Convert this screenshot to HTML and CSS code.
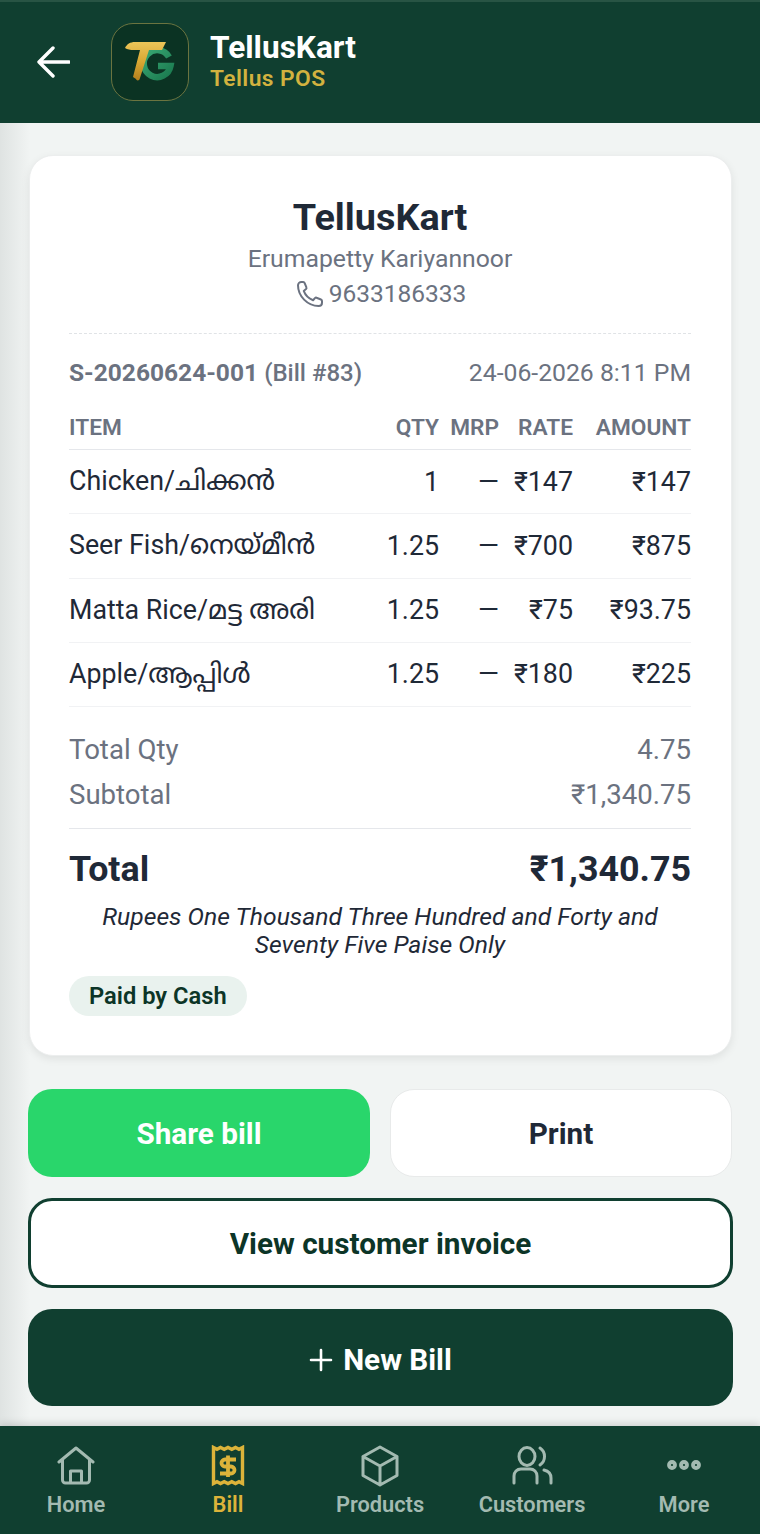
FILE: index.html
```html
<!DOCTYPE html>
<html lang="en">
<head>
    <meta charset="UTF-8">
    <meta name="viewport" content="width=device-width, initial-scale=1.0">
    <title>TellusKart</title>
    <link rel="stylesheet" href="styles.css">
</head>
<body>
    <header class="topbar">
        <svg class="back" width="34" height="34" viewBox="0 0 34 34" fill="none" stroke="#fff" stroke-width="3.4" stroke-linecap="round" stroke-linejoin="round"><path d="M3 17H33M17 3 3 17l14 14"/></svg>
        <div class="logo">
            <svg width="78" height="78" viewBox="0 0 78 78">
                <defs>
                    <linearGradient id="gold" x1="0" y1="0" x2="0" y2="1"><stop offset="0" stop-color="#edc659"/><stop offset=".5" stop-color="#d9a834"/><stop offset="1" stop-color="#b27f1d"/></linearGradient>
                    <linearGradient id="grn" x1="0" y1="0" x2="1" y2="1"><stop offset="0" stop-color="#3aa874"/><stop offset="1" stop-color="#1a7a4f"/></linearGradient>
                </defs>
                <path d="M58 35A13.500 13.500 0 1 0 59.500 44H47" fill="none" stroke="url(#grn)" stroke-width="6.500"/>
                <path d="M14 26C16 22 19 20 24 20H55L51 28H38L28.500 57.500C27 59 25.500 58.500 25 57L22 55 29 28H23C19 28 16.500 27.500 14 26z" fill="url(#gold)"/>
            </svg>
        </div>
        <div class="brand">
            <div class="brand-name">TellusKart</div>
            <div class="brand-sub">Tellus POS</div>
        </div>
    </header>

    <main class="content">
        <section class="receipt">
            <div class="shop">
                <h1>TellusKart</h1>
                <p>Erumapetty Kariyannoor</p>
                <p class="phone">
                    <svg width="32" height="32" viewBox="0 0 24 24" fill="none" stroke="#6b7280" stroke-width="1.500" stroke-linecap="round" stroke-linejoin="round"><path d="M3 5.500C3 4 4.200 3 5.500 3h1.400c.5 0 .9.300 1.100.8l1.300 3.300c.2.400 0 .9-.3 1.200L7.300 9.700c1.100 3 3.700 5.700 7 7l1.400-1.600c.3-.3.8-.5 1.200-.3l3.300 1.300c.5.200.8.600.8 1.100v1.300c0 1.400-1.100 2.500-2.500 2.500C10 21 3 13.500 3 5.500z"/></svg>
                    9633186333
                </p>
            </div>

            <div class="meta">
                <span><b>S-20260624-001</b> <span class="medium">(Bill #83)</span></span>
                <span>24-06-2026 8:11 PM</span>
            </div>

            <div class="row head">
                <span>ITEM</span><span class="num">QTY</span><span class="num">MRP</span><span class="num">RATE</span><span class="num">AMOUNT</span>
            </div>
            <div class="row">
                <span class="name">Chicken/ചിക്കൻ</span><span class="num">1</span><span class="num">—</span><span class="num">₹147</span><span class="num">₹147</span>
            </div>
            <div class="row">
                <span class="name">Seer Fish/നെയ്മീൻ</span><span class="num">1.25</span><span class="num">—</span><span class="num">₹700</span><span class="num">₹875</span>
            </div>
            <div class="row">
                <span class="name">Matta Rice/മട്ട അരി</span><span class="num">1.25</span><span class="num">—</span><span class="num">₹75</span><span class="num">₹93.75</span>
            </div>
            <div class="row">
                <span class="name">Apple/ആപ്പിൾ</span><span class="num">1.25</span><span class="num">—</span><span class="num">₹180</span><span class="num">₹225</span>
            </div>

            <div class="sums">
                <div class="sum"><span>Total Qty</span><span>4.75</span></div>
                <div class="sum"><span>Subtotal</span><span>₹1,340.75</span></div>
            </div>
            <div class="total"><span>Total</span><span>₹1,340.75</span></div>
            <p class="words">Rupees One Thousand Three Hundred and Forty and<br>Seventy Five Paise Only</p>
            <span class="paid">Paid by Cash</span>
        </section>

        <div class="btn-pair">
            <button class="btn btn-share" type="button">Share bill</button>
            <button class="btn btn-print" type="button">Print</button>
        </div>
        <button class="btn btn-invoice" type="button">View customer invoice</button>
        <button class="btn btn-new" type="button">
            <svg width="24" height="24" viewBox="0 0 24 24" fill="none" stroke="#fff" stroke-width="2.600" stroke-linecap="round"><path d="M12 2v20M2 12h20"/></svg>
            New Bill
        </button>
    </main>

    <nav class="tabs">
        <div class="tab">
            <svg width="38" height="42" viewBox="0 0 38 42" fill="none" stroke="currentColor" stroke-width="3" stroke-linecap="round" stroke-linejoin="round"><path d="M2 17 19 3l17 14M5.500 15v20a3 3 0 0 0 3 3h21a3 3 0 0 0 3-3V15M13.500 38V26h11v12"/></svg>
            <span>Home</span>
        </div>
        <div class="tab active">
            <svg width="34" height="42" viewBox="0 0 34 42" fill="none" stroke="currentColor"><path d="M2.500 2.500l3.500 1.800 3.500-1.800 3.700 1.800 3.800-1.800 3.800 1.800 3.700-1.800 3.500 1.800 3.500-1.800v36l-3.500-1.800-3.500 1.800-3.700-1.800-3.800 1.800-3.800-1.800-3.700 1.800-3.500-1.800-3.500 1.800z" stroke-width="3.400"/><path d="M25 14.500H14a3.500 3.500 0 0 0 0 7h6a3.500 3.500 0 0 1 0 7H9M17 10.500v21.500" stroke-width="3.800"/></svg>
            <span>Bill</span>
        </div>
        <div class="tab">
            <svg width="38" height="42" viewBox="0 0 38 42" fill="none" stroke="currentColor" stroke-width="3" stroke-linecap="round" stroke-linejoin="round"><path d="M19 2 36 11.500v19L19 40 2 30.500v-19zM2 11.500 19 21l17-9.500M19 21v19"/></svg>
            <span>Products</span>
        </div>
        <div class="tab">
            <svg width="42" height="42" viewBox="0 0 42 42" fill="none" stroke="currentColor" stroke-width="3" stroke-linecap="round" stroke-linejoin="round"><ellipse cx="16" cy="11.500" rx="8" ry="9"/><path d="M29 3c3 2 4.500 5 4.500 8.500S32 18 29 20M3 38v-7c0-4 3-7 7-7h9c4 0 7 3 7 7v7M33 25c4 1 7 4 7 8v5"/></svg>
            <span>Customers</span>
        </div>
        <div class="tab">
            <svg width="36" height="42" viewBox="0 0 36 42" fill="none" stroke="currentColor" stroke-width="3.800"><circle cx="6" cy="20" r="3"/><circle cx="18" cy="20" r="3"/><circle cx="30" cy="20" r="3"/></svg>
            <span>More</span>
        </div>
    </nav>
</body>
</html>
```

FILE: styles.css
```css
*{
    box-sizing: border-box;
}
body{
    margin: 0;
    width: 760px;
    height: 1534px;
    overflow: hidden;
    display: flex;
    flex-flow: column;
    font-family: Roboto, "Noto Sans", "Noto Sans Malayalam", sans-serif;
    color: #1f2937;
    background-color: #f1f4f3;
}
p, h1{
    margin: 0;
}

/* top bar */
.topbar{
    height: 123px;
    flex: none;
    display: flex;
    align-items: center;
    padding-left: 36px;
    padding-bottom: 2px;
    background-color: #103f30;
    border-top: 2px solid #285444;
}
.back{
    flex: none;
}
.logo{
    width: 78px;
    height: 78px;
    margin-left: 41px;
    flex: none;
    border-radius: 22px;
    border: 1.500px solid #6b7440;
    background-color: #0b3323;
    overflow: hidden;
}
.logo svg{
    display: block;
    margin: -1.500px;
}
.brand{
    margin-left: 21px;
}
.brand-name{
    font-size: 31.600px;
    line-height: 34px;
    font-weight: 700;
    color: #fff;
}
.brand-sub{
    font-size: 22.800px;
    line-height: 28px;
    font-weight: 600;
    letter-spacing: .4px;
    color: #d2b23f;
}

/* main area */
.content{
    flex: 1;
    display: flex;
    flex-flow: column;
    padding: 32px 27px 0 28px;
    background: linear-gradient(to right, #dfe3e2 0, #f1f4f3 30px);
}
.receipt{
    height: 901px;
    margin: 0 1px;
    padding: 40px 40px 0 39px;
    background-color: #fff;
    border: 1px solid #eceeee;
    border-radius: 24px;
    box-shadow: 0 3px 8px rgba(0,0,0,.08);
}
.shop{
    height: 139px;
    margin-top: -1px;
    text-align: center;
    font-size: 24.750px;
    line-height: 35px;
    color: #6b7280;
    border-bottom: 1px dashed #e0e3e6;
}
.shop h1{
    font-size: 37.800px;
    line-height: 44px;
    font-weight: 700;
    color: #1f2937;
    margin-bottom: 2px;
}
.phone{
    display: flex;
    justify-content: center;
    align-items: center;
    gap: 3px;
    font-size: 24.500px;
}
.meta{
    display: flex;
    justify-content: space-between;
    align-items: center;
    height: 75px;
    padding-top: 1px;
    font-size: 24.750px;
    color: #6b7280;
}
.meta b{
    font-weight: 700;
    font-size: 24.500px;
}
.medium{
    font-weight: 500;
    font-size: 24px;
}

/* item rows */
.row{
    display: grid;
    grid-template-columns: 1fr 70px 60px 74px 118px;
    align-items: center;
    height: 64.250px;
    font-size: 26.800px;
    border-bottom: 1px solid #f1f2f4;
}
.row span{
    white-space: nowrap;
}
.row .name{
    padding-top: 2px;
}
.head{
    height: 41px;
    padding-bottom: 4px;
    font-size: 22.700px;
    font-weight: 600;
    color: #6b7280;
    border-bottom-color: #e5e7eb;
}
.num{
    text-align: right;
}

/* totals */
.sums{
    padding: 20px 0 11px;
    font-size: 27.600px;
    line-height: 45px;
    color: #6b7280;
    border-bottom: 1px solid #e5e7eb;
}
.sum, .total{
    display: flex;
    justify-content: space-between;
}
.total{
    margin-top: 18px;
    font-size: 35.800px;
    line-height: 44px;
    font-weight: 700;
}
.words{
    margin-top: 12px;
    text-align: center;
    font-size: 24.700px;
    line-height: 28px;
    font-style: italic;
}
.paid{
    display: inline-block;
    margin-top: 17px;
    padding: 0 20px;
    font-size: 23.700px;
    line-height: 40px;
    font-weight: 600;
    color: #0c3527;
    background-color: #e9f2ee;
    border-radius: 20px;
}

/* buttons */
.btn{
    display: flex;
    align-items: center;
    justify-content: center;
    gap: 10px;
    font-family: inherit;
    font-size: 29.700px;
    font-weight: 700;
    border: none;
    padding: 0;
}
.btn-pair{
    display: grid;
    grid-template-columns: 342px 342px;
    gap: 20px;
    margin-top: 33px;
}
.btn-share{
    height: 88px;
    color: #fff;
    background-color: #29d66b;
    border-radius: 24px;
}
.btn-print{
    height: 88px;
    color: #1f2937;
    background-color: #fff;
    border: 1px solid #e8eaea;
    border-radius: 24px;
}
.btn-invoice{
    height: 90px;
    margin-top: 21px;
    padding-top: 1px;
    color: #0c3527;
    background-color: #fff;
    border: 3px solid #103f30;
    border-radius: 24px;
}
.btn-new{
    height: 97px;
    margin-top: 21px;
    padding-top: 4px;
    color: #fff;
    background-color: #103f30;
    border-radius: 24px;
}

/* bottom nav */
.tabs{
    height: 108px;
    flex: none;
    display: grid;
    grid-template-columns: repeat(5, 152px);
    background-color: #103f30;
    box-shadow: 0 -2px 8px rgba(0,0,0,.16);
}
.tab{
    display: flex;
    flex-flow: column;
    align-items: center;
    padding-top: 19px;
    font-size: 21.800px;
    font-weight: 600;
    color: #a3bab1;
}
.tab svg{
    height: 42px;
    display: block;
}
.tab span{
    margin-top: 5px;
    line-height: 26px;
}
.active{
    color: #dcb33a;
}
```
